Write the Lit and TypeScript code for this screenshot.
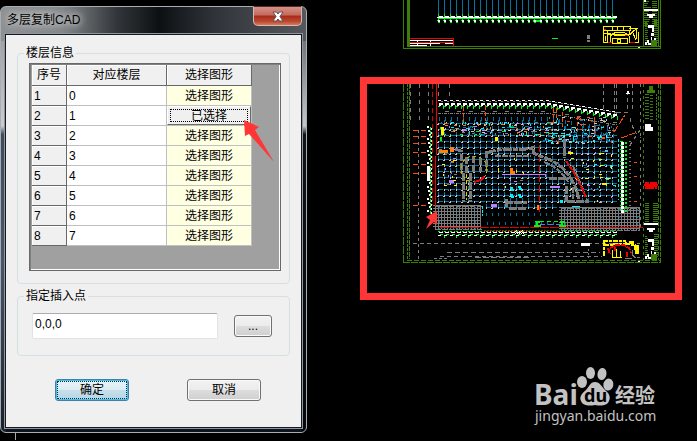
import { LitElement, html, svg, css } from "lit";
import { customElement } from "lit/decorators.js";

type Ink = Record<string, string>;

/** Collects pixel rectangles per colour, so that each colour is one path. */
class Plotter {
  ink: Ink = {};
  seed = 7;
  rnd() {
    this.seed = (this.seed * 16807) % 2147483647;
    return this.seed / 2147483647;
  }
  box(c: string, x: number, y: number, w: number, h: number) {
    this.ink[c] = (this.ink[c] ?? "") + `M${x} ${y}h${w}v${h}h${-w}z`;
  }
  hdash(c: string, x1: number, x2: number, y: number, on: number, off: number, h = 1) {
    for (let x = x1; x < x2; x += on + off) this.box(c, x, y, Math.min(on, x2 - x), h);
  }
  vdash(c: string, x: number, y1: number, y2: number, on: number, off: number, w = 1) {
    for (let y = y1; y < y2; y += on + off) this.box(c, x, y, w, Math.min(on, y2 - y));
  }
  specks(colors: string[], n: number, x: number, y: number, w: number, h: number) {
    for (let i = 0; i < n; i++) {
      const c = colors[Math.floor(this.rnd() * colors.length)];
      const px = Math.floor(x + this.rnd() * w);
      const py = Math.floor(y + this.rnd() * h);
      const flat = this.rnd() > 0.5;
      this.box(c, px, py, flat ? 3 : 1, flat ? 1 : 2);
    }
  }
}

const GREEN = "#3d7f06";
const LIME = "#00f51a";
const BLUE = "#0271a0";
const GRAY = "#7d7d7d";
const WHITE = "#ffffff";
const RED = "#dc0000";
const ORANGE = "#ff4a08";
const AMBER = "#ff8200";
const YELLOW = "#fff500";
const CYAN = "#00f0f5";
const VIOLET = "#c77cff";

function titleColumn(p: Plotter, y: number) {
  // White characters at the foot of the sheet's title column.
  p.box(WHITE, 644, y, 14, 2);
  p.box(WHITE, 647, y + 5, 8, 2);
  p.box(WHITE, 649, y + 7, 4, 2);
  for (let k = 0; k < 12; k++) {
    p.box(GREEN, 645, y + 13 + k * 2, k % 3 ? 3 : 2, 1);
    p.box(GREEN, 654, y + 11 + k * 2, 4, 1);
  }
  p.box(GREEN, 651, y + 31, 6, 6);
  p.box(WHITE, 648, y + 16, 6, 3);
  p.box(WHITE, 652, y + 19, 2, 4);
  p.box(WHITE, 651, y + 24, 3, 3);
  p.box(WHITE, 651, y + 28, 1, 3);
  p.box(WHITE, 654, y + 29, 2, 2);
  p.box(WHITE, 647, y + 31, 2, 3);
  p.box(WHITE, 645, y + 33, 2, 3);
  p.box(WHITE, 648, y + 34, 3, 2);
  p.box(WHITE, 638, y + 38, 2, 1);
}

function topSheet(): Ink {
  const p = new Plotter();
  p.box(GREEN, 403, 0, 1, 49);
  p.box(GREEN, 407, 0, 3, 47);
  p.box(GREEN, 407, 46, 253, 1);
  p.box(GREEN, 403, 48, 258, 1);
  p.box(GREEN, 660, 0, 1, 49);
  p.box(GREEN, 643, 0, 1, 47);
  p.box(GREEN, 658, 0, 1, 47);
  for (let k = 0; k < 30; k++) {
    const x = 438 + k * 6;
    p.box(BLUE, x, 0, 1, 15);
    p.box(LIME, x, 14, 1, 7);
    p.box(LIME, x - 1, 20, 3, 1);
    p.box(LIME, x, 22, 2, 1);
  }
  p.box(LIME, 438, 18, 178, 1);
  p.box(LIME, 533, 20, 9, 2);
  for (let k = 0; k < 30; k++) {
    const x = 438 + k * 6;
    p.box(WHITE, x + 1, 16, 4, 2);
    p.box(WHITE, x - 1, 17, 2, 1);
    p.box(WHITE, x, 20, 2, 2);
  }
  p.box("#f00000", 410, 38, 44, 1);
  p.box("#f00000", 453, 38, 1, 8);
  p.box("#f00000", 410, 42, 43, 1);
  p.box(WHITE, 410, 40, 43, 1);
  p.box(WHITE, 410, 43, 30, 1);
  p.box(WHITE, 417, 40, 1, 6);
  p.box(WHITE, 430, 40, 1, 6);
  p.box(WHITE, 445, 43, 8, 1);
  p.box(WHITE, 410, 45, 17, 1);
  p.box(LIME, 552, 38, 6, 1);
  p.box(GRAY, 587, 35, 3, 4);
  p.box(GRAY, 587, 40, 3, 2);
  for (let y = 1; y < 27; y += 2) {
    p.box(GREEN, 644, y, 3 + ((y * 7) % 5), 1);
    p.box(GREEN, 652, y, 5, 1);
  }
  p.box(WHITE, 644, 0, 2, 2);
  titleColumn(p, 9);
  return p.ink;
}

/** Small key plan in the lower right corner of a sheet. */
function keyPlan(y: number) {
  return svg`
    <g transform="translate(603 ${y})" fill="none" stroke=${YELLOW}>
      <path d="M.5.5h27v4h-27zM.5.5v16h4v-8h22v-4M1 7.500h7M2.500 10v5M4 4v9M9 1v4M14 1v4M20 1v4M26 2.500h8l-4 3l-3 3M29 5l4 9M33.500 3v10M35.500 6v10h-9M7.500 17v-7q2-3 6-3.500h6q6 1 7 4v6M9.500 17.500v-5h15v5zM14.500 13v3h3v-3zM11 9.500h13" />
      <path stroke="#f00000" d="M5 16.500h4M27 16.500h5M1 3.500h2M22 9.500h3" />
    </g>`;
}

/** The same plan with its outer rooms filled. */
function filledKeyPlan(y: number) {
  return svg`
    <g transform="translate(603 ${y})" fill="none">
      <path stroke=${YELLOW} stroke-width="2" stroke-dasharray="5 1 3 1" d="M0 1h23M1 1v15M1 5h10M10 4h17M22 3l13 3" />
      <path fill=${YELLOW} d="M31 5h5v9h-4zM26 1h5v3h-5z" />
      <path stroke=${YELLOW} d="M9.500 10v7M13.500 9v8M17.500 11v6M9 17.500h10" />
      <path stroke="#f00000" stroke-width="2" stroke-dasharray="5 1" d="M5 8l2 6M7 8l6-3h8l5 3l2 5M12 7v4M24 12v6" />
      <path stroke=${GRAY} d="M29.500 10v5l3 3M22 18h7M34 17.500h3" />
    </g>`;
}

function lowerSheet(): Ink {
  const p = new Plotter();
  // Sheet borders.
  p.vdash(GREEN, 403, 84, 262, 8, 1);
  p.vdash(GREEN, 407, 84, 259, 3, 1);
  p.vdash(GREEN, 409, 84, 259, 5, 1);
  p.hdash(GREEN, 407, 660, 260, 5, 2);
  p.hdash(GREEN, 403, 661, 262, 7, 1);
  p.vdash(GREEN, 660, 84, 262, 5, 1);
  p.vdash(GREEN, 643, 84, 260, 3, 3);
  p.vdash(GREEN, 658, 84, 260, 4, 2);

  // Axes of the site.
  for (const x of [410, 419, 428, 438, 449]) p.vdash(GRAY, x, 84, x < 430 ? 122 : 100, 4, 4);
  p.vdash(GRAY, 418, 130, 259, 3, 3);
  for (const x of [603, 614, 616, 627, 632]) p.vdash(GRAY, x, 84, x < 620 ? 114 : 112, 4, 3);
  p.vdash(GRAY, 640, 84, 230, 3, 4);
  p.hdash(GRAY, 413, 640, 243, 4, 3);
  p.hdash(GRAY, 447, 600, 252, 5, 3);
  p.hdash(GRAY, 440, 602, 256, 4, 3);
  p.hdash(GRAY, 475, 530, 257, 6, 2);
  p.hdash(GRAY, 434, 447, 258, 3, 2);

  // Building grid, its upper edge slopes down to the right.
  for (let k = 0; k < 30; k++) {
    const x = 438 + k * 6;
    const dy = x > 545 ? Math.round((x - 545) / 6) : 0;
    p.box(GRAY, x + 3, 101 + dy, 2, 1);
    p.box(WHITE, x, 100 + dy, 3, 1);
    p.box(LIME, x, 106 + dy, 2, 1);
    p.box(LIME, x + 5, 105 + dy, 1, 4);
    p.box(WHITE, x + 1, 103 + dy, 4, 2);
    p.box(WHITE, x + 1, 105 + dy, 2, 1);
    p.hdash(GRAY, x, x + 5, 113 + dy, 3, 1);
    if (k % 2) p.box(GRAY, x + 1, 111 + dy, 4, 1);
    for (let r = 0; r < 17; r++) {
      const y = 117 + r * 6;
      if (y > 203 && (x < 481 || x > 555)) continue;
      if (y < 121 + dy || r < 1) {
        p.box(BLUE, x + 1, y + dy, 1, 4);
        continue;
      }
      if (y > 208) {
        p.box(BLUE, x, y, 1, 3);
        p.box(BLUE, x + 1, y + 9, 1, 3);
        continue;
      }
      p.box(BLUE, x + 1, y, 4, 1);
      if (p.rnd() > 0.4) p.box(BLUE, x, y - 3, 1, 3);
      p.box("#c8c8c8", x, y, 1, 2);
      if (p.rnd() > 0.4) p.box("#c8c8c8", x - 1, y + 1, 1, 1);
    }
    p.hdash(LIME, x, x + 5, 231, 2, 2);
    p.box(WHITE, x + 1, 232, 4, 1);
    p.box(WHITE, x, 235, 3, 1);
    p.box(LIME, x + 2, 234, 3, 1);
    if (k % 2) p.box(LIME, x, 236, 1, 2);
  }

  // Left and right rows of dimension ticks.
  for (let y = 126; y < 211; y += 4) {
    p.box(WHITE, 427 + (y % 3), y, 2, 2);
    p.box(LIME, 430, y + 1, 1, 3);
    p.box(WHITE, 431, y + 2, 1, 2);
  }
  p.box(WHITE, 427, 166, 3, 15);
  for (let y = 141; y < 210; y += 4) {
    p.box(LIME, 620, y, 3, 1);
    p.box(WHITE, 621, y + 1, 3, 3);
    p.box(LIME, 625, y + 1, 2, 2);
    p.box(GRAY, 629, y, 2, 1);
  }
  for (const y of [130, 136, 143, 152, 164, 173, 205]) p.hdash(ORANGE, 413, 426, y, 5, 3);
  for (const y of [162, 176, 201]) p.box(ORANGE, 634, y, 3, 1);

  // Services and fittings, denser along the top of the plan.
  p.specks([CYAN, BLUE, VIOLET, "#c8c8c8", LIME, GRAY, AMBER], 170, 440, 122, 116, 14);
  p.specks([CYAN, BLUE, ORANGE, GRAY, "#c8c8c8"], 120, 546, 117, 68, 27);
  p.specks([CYAN, BLUE], 40, 540, 132, 70, 10);
  p.specks([CYAN, VIOLET, YELLOW, BLUE], 30, 594, 150, 22, 52);
  p.specks([GRAY, BLUE, VIOLET, YELLOW], 18, 565, 145, 30, 50);
  p.specks([VIOLET, YELLOW, AMBER, GRAY], 22, 439, 148, 16, 42);
  p.specks([GRAY, VIOLET, YELLOW, BLUE], 12, 490, 158, 60, 36);
  for (const [x, y] of [[463, 107], [485, 106], [553, 108], [556, 108], [562, 112], [577, 116], [594, 119]]) {
    p.vdash(ORANGE, x, y, y + 15, 4, 2);
  }
  p.vdash(RED, 539, 145, 213, 7, 3);
  p.vdash(RED, 432, 84, 205, 5, 3);
  p.box(AMBER, 439, 150, 9, 3);
  p.box(AMBER, 450, 147, 4, 5);
  p.box(AMBER, 510, 168, 3, 6);
  p.box(AMBER, 512, 171, 3, 3);
  p.box(AMBER, 537, 205, 2, 5);
  p.box(YELLOW, 441, 127, 3, 8);
  p.box(YELLOW, 495, 137, 3, 4);
  p.box(YELLOW, 498, 168, 1, 4);
  p.box(LIME, 440, 137, 2, 5);
  p.box(YELLOW, 568, 152, 5, 2);
  p.box(YELLOW, 599, 153, 5, 1);
  p.box(YELLOW, 602, 183, 5, 2);
  p.box(VIOLET, 449, 180, 5, 3);
  p.box(VIOLET, 502, 174, 44, 1);
  p.box(VIOLET, 491, 204, 6, 3);
  p.box(VIOLET, 550, 186, 10, 2);
  for (const [x, y] of [[510, 187], [518, 186], [510, 194], [518, 194]]) {
    p.box(CYAN, x, y, 3, 2);
    p.box(CYAN, x + 1, y + 2, 3, 2);
  }
  p.box(CYAN, 573, 137, 1, 5);
  p.vdash(CYAN, 618, 139, 200, 3, 2);
  p.box(CYAN, 560, 200, 3, 3);
  p.box(CYAN, 572, 206, 8, 1);

  // Parking decks at both lower corners.
  for (const [x1, x2, y1, y2] of [[435, 482, 205, 229], [561, 640, 207, 230]]) {
    for (let x = x1; x < x2; x += 3) p.box(GRAY, x, y1, 1, y2 - y1);
    for (let y = y1; y < y2; y += 3) p.box(GRAY, x1 - 2, y, x2 - x1 + 1, 1);
    for (let x = x1 + 4; x < x2; x += 18) p.vdash(BLUE, x, y1 + 2, y2, 2, 5);
    p.hdash(GRAY, x1, x2, y1 + 1, 5, 2);
    p.hdash(GRAY, x1, x2, y2, 6, 1);
  }
  p.vdash(CYAN, 482, 206, 216, 3, 1);
  p.hdash(RED, 440, 643, 227, 9, 1);
  p.hdash(RED, 484, 560, 230, 2, 1);
  p.hdash("#6871e8", 540, 562, 224, 5, 3);
  for (const x of [535, 560]) {
    p.box(LIME, x, 221, 5, 2);
    p.box(LIME, x - 1, 225, 7, 2);
    p.box(LIME, x + 1, 223, 2, 3);
  }
  p.hdash(LIME, 540, 560, 221, 4, 3);
  for (let k = 0; k < 10; k++) {
    p.box(WHITE, 514 + k, 230 + (k % 2), 1, 1);
    p.box(WHITE, 514 + k, 232 + (k % 2), 1, 1);
  }
  p.box(WHITE, 581, 243, 9, 3);
  p.box(WHITE, 627, 91, 2, 3);
  p.box(WHITE, 626, 93, 4, 1);
  p.vdash(GRAY, 588, 249, 258, 2, 2);

  // Title column.
  for (let y = 94; y < 121; y += 3) {
    p.box(GREEN, 645, y, 4, 1);
    p.box(GREEN, 650, y + 1, 3, 1);
    p.box(GREEN, 656, y, 1, 2);
  }
  p.box(GREEN, 649, 86, 4, 4);
  p.box(GREEN, 647, 90, 8, 3);
  p.box(WHITE, 645, 124, 6, 7);
  p.box(WHITE, 651, 127, 2, 4);
  p.box("#f00000", 645, 182, 12, 7);
  p.box("#f00000", 644, 184, 14, 2);
  p.box("#000000", 649, 182, 1, 2);
  p.box("#000000", 654, 187, 1, 2);
  for (let y = 203; y < 222; y += 2) {
    p.box(GREEN, 645, y, 4, 1);
    p.box(GREEN, 653, y, 5, 1);
  }
  titleColumn(p, 223);
  return p.ink;
}

const layers = (ink: Ink) =>
  Object.entries(ink).map(([fill, d]) => svg`<path fill=${fill} d=${d} />`);

@customElement("cad-canvas")
export class CadCanvas extends LitElement {
  static styles = css`
    :host { display: block; min-width: 0; }
    .plan { display: block; width: 100%; height: auto; }
    .crisp { shape-rendering: crispEdges; }
    .latin { font: bold 28px "Noto Sans", sans-serif; }
    .inner { font: bold 18px "Noto Sans", sans-serif; }
    .han { font: bold 20px "Noto Sans CJK SC", sans-serif; }
    .site { font: 14px "Noto Sans", sans-serif; }
  `;

  render() {
    return html`
      <svg class="plan" viewBox="307 0 390 441" role="img" aria-label="CAD">
        <g class="crisp">
          ${layers(topSheet())} ${keyPlan(26)}
          ${layers(lowerSheet())}
          <g fill="none" stroke=${GRAY} stroke-width="2">
            <path stroke-width="3" stroke-dasharray="9 1 5 1" d="M487 152.500Q498 149 512 149.500T533 147.500V153L540 156Q560 162 569 176Q577 186 579 201" />
            <path stroke-width="3" stroke-dasharray="8 1" d="M463 173v29M470 173v29M506 199v9M505 202.500h22M509 208.500h18M566 186v16M549 178.500h20M564 139v19M567 201.500h22" />
            <path stroke-dasharray="6 1" d="M495 156h36M544 162Q560 168 568 182M573 166Q580 182 587 200M573 187v12" />
            <path stroke-width="3" stroke-dasharray="7 2" d="M455 149l6 2v22M466 157v18M473 156v18M480 158v14M486 151v20" />
          </g>
          <g fill="none">
            <circle cx="474" cy="169" r="13" stroke="#b8ae00" stroke-dasharray="3 3" />
            <path stroke="#d8cf00" stroke-dasharray="4 2" d="M466.500 174v26" />
            <path stroke="#f00000" d="M436.500 84v65l-1.500 20v37" />
            <path stroke="#f00000" stroke-width="2" stroke-dasharray="5 1" d="M566 161Q578 177 586 198" />
            <path stroke="#f00000" stroke-width="2" d="M474 182l7-2l3-3" />
            <path stroke="#ff4a08" stroke-dasharray="7 2" d="M614 132l11-17M621 138l17-6" />
            <path stroke=${GRAY} stroke-dasharray="4 3" d="M617 112h12M630 118q3 14 11 20M640 130l-12 18" />
          </g>
          ${filledKeyPlan(240)}
          <rect x="363.500" y="80.500" width="315" height="216" fill="none" stroke="#ff3635" stroke-width="7" />
        </g>
        <path fill="#ff3635" d="M437 211l-11 6 4 3-4 9 8-7 3 3z" />
        <g fill="#c2c2c2">
          <text class="latin" x="534" y="405">Bai</text>
          <ellipse cx="582" cy="382" rx="5" ry="6" />
          <ellipse cx="590.500" cy="373" rx="4.500" ry="6" />
          <ellipse cx="602" cy="374" rx="4.500" ry="6" transform="rotate(10 602 374)" />
          <ellipse cx="608.500" cy="384.500" rx="5" ry="6" transform="rotate(12 608 384)" />
          <path d="M595 382c5 0 7 5 10 8 4 3 6 7 4 11-2 5-8 5-14 4-6 1-12 1-14-4-2-4 1-8 5-11 3-3 4-8 9-8z" />
          <text class="inner" x="584" y="402" fill="#000">du</text>
          <text class="han" x="615" y="403">经验</text>
          <text class="site" x="535" y="421">jingyan.baidu.com</text>
        </g>
      </svg>`;
  }
}

@customElement("copy-dialog")
export class CopyDialog extends LitElement {
  static styles = css`
    :host {
      display: block;
      box-sizing: border-box;
      position: relative;
      border: 1px solid #a9adb1;
      border-radius: 6px;
      padding: 0 4px 4px;
      background:
        linear-gradient(90deg, #8e9194 0, #84878a 20%, #32363a 38%, #0d1013 52%, #30343a 70%, #55585c 100%) top / 100% 34px no-repeat,
        linear-gradient(#8f9397 0, #c9ccd0 28%, #3d4c5c 30%, #46576b 60%, #17202b 100%) left / 5px 100% no-repeat,
        linear-gradient(#505458 0, #c4c8cc 28%, #101418 30%, #05090e 100%) right / 5px 100% no-repeat,
        #0c131c;
      color: #000;
      font: 12px/16px "Liberation Sans", "Noto Sans CJK SC", sans-serif;
    }
    button, input, table { font: inherit; color: inherit; }
    .title {
      display: flex;
      justify-content: space-between;
      align-items: flex-start;
      height: 27px;
    }
    .name {
      margin: 5px 0 0 2px;
      font: inherit;
      text-shadow: 0 0 6px #d0d0d0, 0 0 8px #c4c4c4, 0 0 10px #b0b0b0;
    }
    .close {
      display: grid;
      place-items: center;
      width: 49px;
      height: 20px;
      margin: -1px 0 0;
      padding: 0;
      border: 1px solid #d2b9b4;
      border-top-color: #5a2822;
      border-radius: 0 0 5px 5px;
      background: linear-gradient(#d3948a 0, #c4685c 45%, #a82a1a 50%, #b94a30 80%, #d9775a 100%);
    }
    .close svg { display: block; }
    .client {
      border: 1px solid #16191d;
      padding: 10px 11px 26px;
      background: #f0f0f0;
      box-shadow: 0 0 0 1px #8e959c;
    }
    fieldset {
      min-width: 0;
      margin: 0;
      border: 1px solid #d5dfe5;
      border-radius: 4px;
    }
    .floors { padding: 2px 8px 12px 11px; }
    .point {
      display: flex;
      align-items: center;
      gap: 16px;
      margin-top: 4px;
      padding: 9px 17px 16px 14px;
    }
    legend { padding: 0 2px; margin-left: -5px; }
    .point legend { margin-left: -8px; }
    .list {
      box-sizing: border-box;
      height: 208px;
      border: 1px solid #696969;
      padding: 1px 2px;
      background: #a0a0a0;
      box-shadow: inset 1px 1px #808080, inset -1px -1px #fff;
    }
    table {
      width: 220px;
      table-layout: fixed;
      border-collapse: separate;
      border-spacing: 0;
    }
    .no { width: 35px; }
    .level { width: 100px; }
    th, td {
      box-sizing: border-box;
      height: 20px;
      padding: 0 2px;
      text-align: left;
      font-weight: normal;
      line-height: 16px;
      background: #fff;
      border: solid #c0c0c0;
      border-width: 0 1px 1px 0;
    }
    th {
      background: #f0f0f0;
      border-color: #696969;
      box-shadow: inset 1px 1px #fff;
    }
    thead th { height: 21px; padding: 0; text-align: center; }
    td:last-child { padding: 0; }
    .pick {
      display: block;
      width: 100%;
      height: 19px;
      padding: 0;
      border: 0;
      background: #ffffe1;
    }
    .pick.done {
      border: 1px solid;
      border-color: #fff #696969 #696969 #fff;
      background: #f0f0f0;
      outline: 1px dotted #000;
      outline-offset: -4px;
    }
    .coords {
      flex: 1;
      min-width: 0;
      box-sizing: border-box;
      height: 26px;
      padding: 0 2px 5px;
      border: 1px solid #e2e3ea;
      border-top-color: #abadb3;
      border-radius: 2px;
      background: #fff;
    }
    .push {
      box-sizing: border-box;
      width: 74px;
      height: 22px;
      padding: 0;
      border: 1px solid #707070;
      border-radius: 3px;
      background: linear-gradient(#f2f2f2 0, #ebebeb 50%, #dddddd 50%, #cfcfcf 100%);
      box-shadow: inset 0 0 0 1px #fafafa;
    }
    .push.small { width: 38px; }
    .push.main {
      border-color: #3c7fb1;
      background: linear-gradient(#e9f3f8 0, #dcebf3 50%, #c6dfeb 50%, #b8d5e4 100%);
      box-shadow: inset 0 0 0 1px #35c7f3;
      outline: 1px dotted #222;
      outline-offset: -3px;
    }
    .actions {
      display: flex;
      justify-content: space-between;
      margin: 23px 29px 0 38px;
    }
    .pointer { position: absolute; left: 243px; top: 113px; }
  `;

  private floors = [0, 1, 2, 3, 4, 5, 6, 7];

  render() {
    return html`
      <header class="title">
        <h1 class="name">多层复制CAD</h1>
        <button class="close" type="button" aria-label="关闭">
          <svg width="12" height="11" viewBox="0 0 12 11">
            <path d="M1 1h3.500l1.500 2 1.500-2H11L8 5.500l3 4.500H7.500L6 8l-1.500 2H1l3-4.500z" fill="#fff" stroke="#5d5252" />
          </svg>
        </button>
      </header>
      <form class="client">
        <fieldset class="floors">
          <legend>楼层信息</legend>
          <div class="list">
            <table>
              <thead>
                <tr>
                  <th class="no" scope="col">序号</th>
                  <th class="level" scope="col">对应楼层</th>
                  <th scope="col">选择图形</th>
                </tr>
              </thead>
              <tbody>
                ${this.floors.map(
                  (floor, i) => html`<tr>
                    <th scope="row">${i + 1}</th>
                    <td>${floor}</td>
                    <td>
                      <button type="button" class=${floor === 1 ? "pick done" : "pick"}>${floor === 1 ? "已选择" : "选择图形"}</button>
                    </td>
                  </tr>`
                )}
              </tbody>
            </table>
          </div>
        </fieldset>
        <fieldset class="point">
          <legend>指定插入点</legend>
          <input class="coords" type="text" aria-label="指定插入点" .value=${"0,0,0"} />
          <button class="push small" type="button">...</button>
        </fieldset>
        <div class="actions">
          <button class="push main" type="button">确定</button>
          <button class="push" type="button">取消</button>
        </div>
      </form>
      <svg class="pointer" width="31" height="43" viewBox="0 0 31 43" aria-hidden="true">
        <path fill="#ff3635" d="M0 0l15 7-4 3 19 32L5 14l-4 2z" />
      </svg>`;
  }
}

@customElement("app-root")
export class AppRoot extends LitElement {
  static styles = css`
    :host {
      display: grid;
      grid-template-columns: 307px minmax(0, 1fr);
      align-items: start;
      background: #000;
      min-height: 100vh;
    }
    .side { padding-top: 6px; }
    .cursor { width: 1px; height: 7px; margin-left: 15px; background: #a8a8a8; }
  `;

  render() {
    return html`
      <div class="side">
        <copy-dialog></copy-dialog>
        <div class="cursor"></div>
      </div>
      <cad-canvas></cad-canvas>`;
  }
}
